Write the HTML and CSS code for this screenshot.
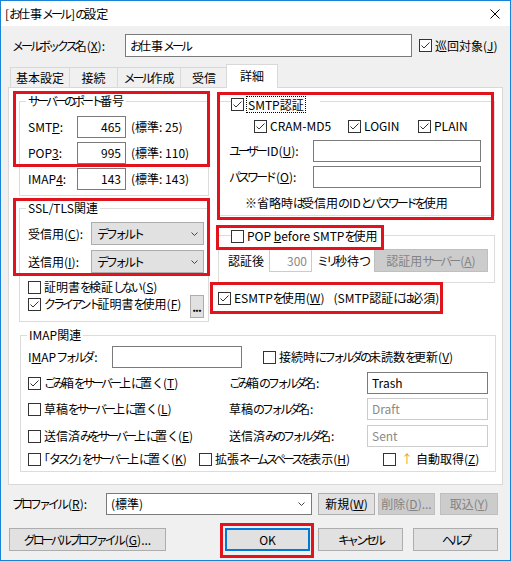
FILE: index.html
```html
<!DOCTYPE html>
<html lang="ja">
<head>
<meta charset="utf-8">
<title>[お仕事メール]の設定</title>
<link rel="stylesheet" href="styles.css">
</head>
<body>
<div class="window">
  <div class="titlebar">
    <span class="title">[<span class="k">お</span>仕事<span class="k ke">メール</span>]<span class="k">の</span>設定</span>
    <svg class="close" width="10" height="10" viewBox="0 0 10 10"><path d="M0.5 0.5 L9.5 9.5 M9.5 0.5 L0.5 9.5" stroke="#000" stroke-width="1"/></svg>
  </div>
  <div class="body">
    <div class="mbrow">
      <span class="mblabel"><span class="k">メールボックス</span>名(<u>X</u>):</span>
      <span class="field mbinput"><span><span class="k">お</span>仕事<span class="k">メール</span></span></span>
      <span class="chk mbchk"><span class="cb"><svg viewBox="0 0 11 11"><path d="M1.5 5.5 L4 8 L9.5 2.5" fill="none" stroke="#333" stroke-width="1"/></svg></span><span>巡回対象(<u>J</u>)</span></span>
    </div>
    <div class="tabs">
      <span class="tab t1">基本設定</span>
      <span class="tab t2">接続</span>
      <span class="tab t3"><span><span class="k">メール</span>作成</span></span>
      <span class="tab t4">受信</span>
      <span class="tab sel">詳細</span>
    </div>
    <div class="panel">
      <div class="cols">
        <div class="colL">
          <fieldset class="grp ports">
            <legend><span class="k">サーバーのポート</span>番号</legend>
            <div class="prow"><span class="plabel">SMT<u>P</u>:</span><span class="field pinput">465</span><span class="pnote">(標準: 25)</span></div>
            <div class="prow"><span class="plabel">POP<u>3</u>:</span><span class="field pinput">995</span><span class="pnote">(標準: 110)</span></div>
            <div class="prow"><span class="plabel">IMAP<u>4</u>:</span><span class="field pinput">143</span><span class="pnote">(標準: 143)</span></div>
          </fieldset>
          <fieldset class="grp ssl">
            <legend>SSL/TLS関連</legend>
            <div class="srow"><span class="slabel">受信用(<u>C</u>):</span><span class="select"><span class="k">デフォルト</span><svg width="7" height="4" viewBox="0 0 7 4"><path d="M0.5 0.5 L3.5 3.5 L6.5 0.5" fill="none" stroke="#444" stroke-width="1"/></svg></span></div>
            <div class="srow"><span class="slabel">送信用(<u>I</u>):</span><span class="select"><span class="k">デフォルト</span><svg width="7" height="4" viewBox="0 0 7 4"><path d="M0.5 0.5 L3.5 3.5 L6.5 0.5" fill="none" stroke="#444" stroke-width="1"/></svg></span></div>
            <div class="cert1"><span class="chk"><span class="cb"></span><span>証明書<span class="k">を</span>検証<span class="k ke">しない</span>(<u>S</u>)</span></span></div>
            <div class="cert2"><span class="chk"><span class="cb"><svg viewBox="0 0 11 11"><path d="M1.5 5.5 L4 8 L9.5 2.5" fill="none" stroke="#333" stroke-width="1"/></svg></span><span><span class="k">クライアント</span>証明書<span class="k">を</span>使用(<u>F</u>)</span></span><span class="btn dots">...</span></div>
          </fieldset>
        </div>
        <div class="colR">
          <fieldset class="grp smtp">
            <legend><span class="lg"><span class="cb"><svg viewBox="0 0 11 11"><path d="M1.5 5.5 L4 8 L9.5 2.5" fill="none" stroke="#333" stroke-width="1"/></svg></span><span class="focus">SMTP認証</span></span></legend>
            <div class="authrow">
              <span class="chk a1"><span class="cb"><svg viewBox="0 0 11 11"><path d="M1.5 5.5 L4 8 L9.5 2.5" fill="none" stroke="#333" stroke-width="1"/></svg></span><span>CRAM-MD5</span></span>
              <span class="chk a2"><span class="cb"><svg viewBox="0 0 11 11"><path d="M1.5 5.5 L4 8 L9.5 2.5" fill="none" stroke="#333" stroke-width="1"/></svg></span><span>LOGIN</span></span>
              <span class="chk"><span class="cb"><svg viewBox="0 0 11 11"><path d="M1.5 5.5 L4 8 L9.5 2.5" fill="none" stroke="#333" stroke-width="1"/></svg></span><span>PLAIN</span></span>
            </div>
            <div class="urow u1"><span class="ulabel"><span class="k ke">ユーザー</span>ID(<u>U</u>):</span><span class="field uinput"></span></div>
            <div class="urow u2"><span class="ulabel"><span class="k ke">パスワード</span>(<u>O</u>):</span><span class="field uinput"></span></div>
            <div class="note">※省略時<span class="k">は</span>受信用<span class="k ke">の</span>ID<span class="k">とパスワードを</span>使用</div>
          </fieldset>
          <fieldset class="grp pop">
            <legend><span class="lg"><span class="cb"></span><span>POP <u>b</u>efore SMTP<span class="k">を</span>使用</span></span></legend>
            <div class="poprow"><span class="poplabel">認証後</span><span class="field dis popinput">300</span><span class="popms"><span class="k">ミリ</span>秒待<span class="k">つ</span></span><span class="btn disabled authsrv"><span>認証用<span class="k ke">サーバー</span>(<u>A</u>)</span></span></div>
          </fieldset>
          <div class="esmtp"><span class="chk"><span class="cb"><svg viewBox="0 0 11 11"><path d="M1.5 5.5 L4 8 L9.5 2.5" fill="none" stroke="#333" stroke-width="1"/></svg></span><span>ESMTP<span class="k">を</span>使用(<u>W</u>)</span></span><span class="esnote">(SMTP認証<span class="k">には</span>必須)</span></div>
        </div>
      </div>
      <fieldset class="grp imap">
        <legend>IMAP関連</legend>
        <div class="irow ra"><span class="ilabelA">I<u>M</u>AP<span class="k ke">フォルダ</span>:</span><span class="field iinputA"></span><span class="chk ichkA"><span class="cb"></span><span>接続時<span class="k">にフォルダの</span>未読数<span class="k">を</span>更新(<u>V</u>)</span></span></div>
        <div class="irow rb"><span class="c1"><span class="chk"><span class="cb"><svg viewBox="0 0 11 11"><path d="M1.5 5.5 L4 8 L9.5 2.5" fill="none" stroke="#333" stroke-width="1"/></svg></span><span><span class="k">ごみ</span>箱<span class="k">をサーバー</span>上<span class="k">に</span>置<span class="k ke">く</span>(<u>T</u>)</span></span></span><span class="c2"><span class="k">ごみ</span>箱<span class="k">のフォルダ</span>名:</span><span class="field finput">Trash</span></div>
        <div class="irow rc"><span class="c1"><span class="chk"><span class="cb"></span><span>草稿<span class="k">をサーバー</span>上<span class="k">に</span>置<span class="k ke">く</span>(<u>L</u>)</span></span></span><span class="c2">草稿<span class="k">のフォルダ</span>名:</span><span class="field dis finput">Draft</span></div>
        <div class="irow rd"><span class="c1"><span class="chk"><span class="cb"></span><span>送信済<span class="k">みをサーバー</span>上<span class="k">に</span>置<span class="k ke">く</span>(<u>E</u>)</span></span></span><span class="c2">送信済<span class="k">みのフォルダ</span>名:</span><span class="field dis finput">Sent</span></div>
        <div class="irow re"><span class="e1"><span class="chk"><span class="cb"></span><span><span class="kl">「</span><span class="k">タスク</span><span class="kr">」</span><span class="k">をサーバー</span>上<span class="k">に</span>置<span class="k ke">く</span>(<u>K</u>)</span></span></span><span class="e2"><span class="chk"><span class="cb"></span><span>拡張<span class="k">ネームスペースを</span>表示(<u>H</u>)</span></span></span><span class="chk e3"><span class="cb"></span><span><span class="arrow">↑</span>自動取得(<u>Z</u>)</span></span></div>
      </fieldset>
    </div>
    <div class="profrow">
      <span class="proflabel"><span class="k ke">プロファイル</span>(<u>R</u>):</span>
      <span class="combo"><span>(標準)</span><svg width="7" height="4" viewBox="0 0 7 4"><path d="M0.5 0.5 L3.5 3.5 L6.5 0.5" fill="none" stroke="#444" stroke-width="1"/></svg></span>
      <span class="btn b-new"><span>新規(<u>W</u>)</span></span>
      <span class="btn disabled b-del"><span>削除(<u>D</u>)...</span></span>
      <span class="btn disabled b-imp"><span>取込(<u>Y</u>)</span></span>
    </div>
    <div class="btnrow">
      <span class="btn b-global"><span><span class="k ke">グローバルプロファイル</span>(<u>G</u>)...</span></span>
      <span class="btn default b-ok">OK</span>
      <span class="btn b-cancel"><span class="k">キャンセル</span></span>
      <span class="btn b-help"><span class="k">ヘルプ</span></span>
    </div>
  </div>
  <div class="mark r1"></div>
  <div class="mark r2"></div>
  <div class="mark r3"></div>
  <div class="mark r4"></div>
  <div class="mark r5"></div>
  <div class="mark r6"></div>
</div>
</body>
</html>
```

FILE: styles.css
```css
* { box-sizing: border-box; }
html, body { margin: 0; padding: 0; background: #fff; }
body {
  font-family: "Noto Sans CJK JP", "Noto Sans", sans-serif;
  font-size: 12px;
  line-height: 16px;
  color: #000;
}
u { text-decoration: underline; text-underline-offset: 1px; }
/* kana runs: narrower, like the proportional kana of the Windows UI font */
.k { letter-spacing: -3px; }
.ke { margin-right: 2px; }
.kl { margin-left: -6px; letter-spacing: -1px; }
.kr { letter-spacing: -6px; }

.window {
  position: relative;
  width: 511px;
  height: 561px;
  border: 1px solid #1883d7;
  background: #f0f0f0;
  display: flex;
  flex-direction: column;
}
.titlebar {
  height: 25px;
  flex: none;
  background: #fff;
  display: flex;
  align-items: center;
  justify-content: space-between;
  padding: 0 10px 0 4px;
}
.body { padding: 8px 0 0 7px; display: flex; flex-direction: column; }

/* generic controls */
.field {
  display: flex;
  align-items: center;
  height: 22px;
  border: 1px solid #7a7a7a;
  background: #fff;
  padding: 0 4px;
  white-space: nowrap;
  flex: none;
}
.field.dis { border-color: #cccccc; color: #8a8a8a; }
.chk { display: flex; align-items: center; gap: 3px; line-height: 18px; white-space: nowrap; }
.cb {
  width: 13px;
  height: 13px;
  flex: none;
  border: 1px solid #333;
  background: #fff;
  display: inline-block;
}
.cb svg { display: block; width: 11px; height: 11px; }
.btn {
  display: flex;
  align-items: center;
  justify-content: center;
  background: #e1e1e1;
  border: 1px solid #adadad;
  white-space: nowrap;
  flex: none;
}
.btn.disabled { background: #cccccc; border-color: #bfbfbf; color: #838383; }
.btn.default { border: 2px solid #0078d7; }

/* mailbox row */
.mbrow { display: flex; align-items: center; height: 23px; padding-left: 4px; }
.mblabel { width: 113px; white-space: nowrap; }
.mbinput { width: 287px; height: 23px; }
.mbchk { margin-left: 7px; }

/* tabs */
.tabs { display: flex; align-items: flex-end; height: 23px; margin-top: 7px; padding-left: 2px; }
.tab {
  height: 20px;
  border: 1px solid #d9d9d9;
  border-bottom: none;
  background: #f0f0f0;
  margin-right: -1px;
  display: flex;
  align-items: center;
  justify-content: center;
  white-space: nowrap;
}
.t1 { width: 60px; }
.t2 { width: 49px; }
.t3 { width: 64px; }
.t4 { width: 48px; margin-right: -2px; }
.tab.sel {
  width: 52px;
  height: 24px;
  background: #fff;
  margin-bottom: -1px;
  position: relative;
  z-index: 1;
  padding-bottom: 2px;
}

/* panel */
.panel {
  width: 495px;
  height: 398px;
  border: 1px solid #d9d9d9;
  background: #fff;
  padding: 5px 7px 0 10px;
}
.cols { display: flex; gap: 9px; align-items: flex-start; }
.colL { width: 190px; display: flex; flex-direction: column; gap: 4px; }
.colR { width: 277px; margin-top: -4px; display: flex; flex-direction: column; }

fieldset { margin: 0; min-width: 0; border: 1px solid #dcdcdc; padding: 0; }
legend { padding: 0 2px; margin-left: -2px; line-height: 16px; height: 16px; white-space: nowrap; }

/* ports */
.ports { padding: 7px 4px 5px 8px; }
.prow { display: flex; align-items: center; height: 22px; }
.prow + .prow { margin-top: 4px; }
.plabel { width: 49px; }
.pinput { width: 49px; justify-content: flex-end; }
.pnote { margin-left: 5px; white-space: nowrap; }

/* ssl */
.ssl { padding: 6px 4px 3px 8px; }
.srow { display: flex; align-items: center; height: 23px; }
.srow + .srow { margin-top: 5px; }
.slabel { width: 63px; white-space: nowrap; }
.select {
  width: 113px;
  height: 23px;
  background: #e1e1e1;
  border: 1px solid #adadad;
  display: flex;
  align-items: center;
  justify-content: space-between;
  padding: 0 5px;
}
.cert1 { margin-top: 5px; height: 18px; display: flex; }
.cert2 { margin-top: -1px; height: 23px; display: flex; align-items: flex-start; }
.dots { margin-left: auto; width: 14px; height: 23px; font-weight: bold; letter-spacing: -1px; padding-right: 1px; }

/* smtp auth */
.smtp { padding: 0 4px 3px 10px; }
.smtp legend { height: 24px; padding: 6px 14px 0 0; margin-left: 2px; }
.pop legend { height: 24px; padding: 4px 4px 0 0; margin-left: 3px; }
.lg { display: flex; align-items: center; height: 18px; gap: 3px; }
.smtp .lg { gap: 2px; }
.focus { border: 1px dotted #000; height: 17px; line-height: 15px; padding: 0 1px; }
.authrow { display: flex; align-items: center; height: 18px; margin-top: 4px; padding-left: 25px; }
.a1 { width: 94px; }
.a2 { width: 70px; }
.urow { display: flex; align-items: center; height: 22px; }
.u1 { margin-top: 5px; }
.u2 { margin-top: 4px; }
.ulabel { width: 84px; white-space: nowrap; }
.uinput { width: 168px; }
.note { margin-top: 6px; line-height: 18px; padding-left: 16px; white-space: nowrap; }

/* pop before smtp */
.pop { margin-top: 7px; padding: 2px 6px 10px 9px; }
.poprow { display: flex; align-items: center; height: 23px; }
.poplabel { width: 41px; }
.popinput { width: 43px; height: 23px; justify-content: flex-end; }
.popms { margin-left: 5px; white-space: nowrap; }
.authsrv { margin-left: auto; width: 114px; height: 23px; }

.esmtp { display: flex; align-items: center; margin-top: 6px; height: 18px; white-space: nowrap; }
.esnote { margin-left: 9px; }

/* imap */
.imap { margin: 5px -1px 0 1px; padding: 3px 4px 3px 7px; }
.imap legend { margin-left: -1px; }
.irow { display: flex; align-items: center; height: 22px; }
.rb { margin-top: 4px; }
.rc { margin-top: 4px; }
.rd { margin-top: 5px; }
.re { margin-top: 3px; height: 18px; }
.ilabelA { width: 84px; white-space: nowrap; }
.iinputA { width: 130px; }
.ichkA { margin-left: 21px; }
.c1 { width: 201px; display: flex; }
.c2 { width: 138px; white-space: nowrap; }
.finput { width: 121px; }
.e1 { width: 171px; display: flex; }
.e2 { width: 184px; display: flex; }
.arrow { color: #e0a020; margin: 0 3px 0 2px; }

/* bottom */
.profrow { display: flex; align-items: center; height: 22px; margin-top: 8px; padding-left: 4px; }
.proflabel { width: 94px; white-space: nowrap; }
.combo {
  width: 206px;
  height: 22px;
  border: 1px solid #7a7a7a;
  background: #fff;
  display: flex;
  align-items: center;
  justify-content: space-between;
  padding: 0 6px 0 4px;
}
.b-new { margin-left: 6px; width: 57px; height: 22px; }
.b-del { margin-left: 3px; width: 57px; height: 22px; }
.b-imp { margin-left: 5px; width: 58px; height: 22px; }

.btnrow { display: flex; align-items: center; height: 23px; margin-top: 13px; padding-left: 1px; }
.btnrow .btn { height: 23px; }
.b-global { width: 157px; }
.b-ok { margin-left: 59px; width: 85px; }
.b-cancel { margin-left: 8px; width: 85px; }
.b-help { margin-left: 10px; width: 85px; }

/* red annotation boxes */
.mark { position: absolute; border: 3px solid #e3131e; pointer-events: none; }
.r1 { left: 12px; top: 90px; width: 197px; height: 76px; }
.r2 { left: 12px; top: 197px; width: 197px; height: 78px; }
.r3 { left: 216px; top: 91px; width: 277px; height: 128px; }
.r4 { left: 215px; top: 224px; width: 168px; height: 25px; }
.r5 { left: 209px; top: 281px; width: 233px; height: 32px; }
.r6 { left: 219px; top: 522px; width: 94px; height: 35px; }
```
